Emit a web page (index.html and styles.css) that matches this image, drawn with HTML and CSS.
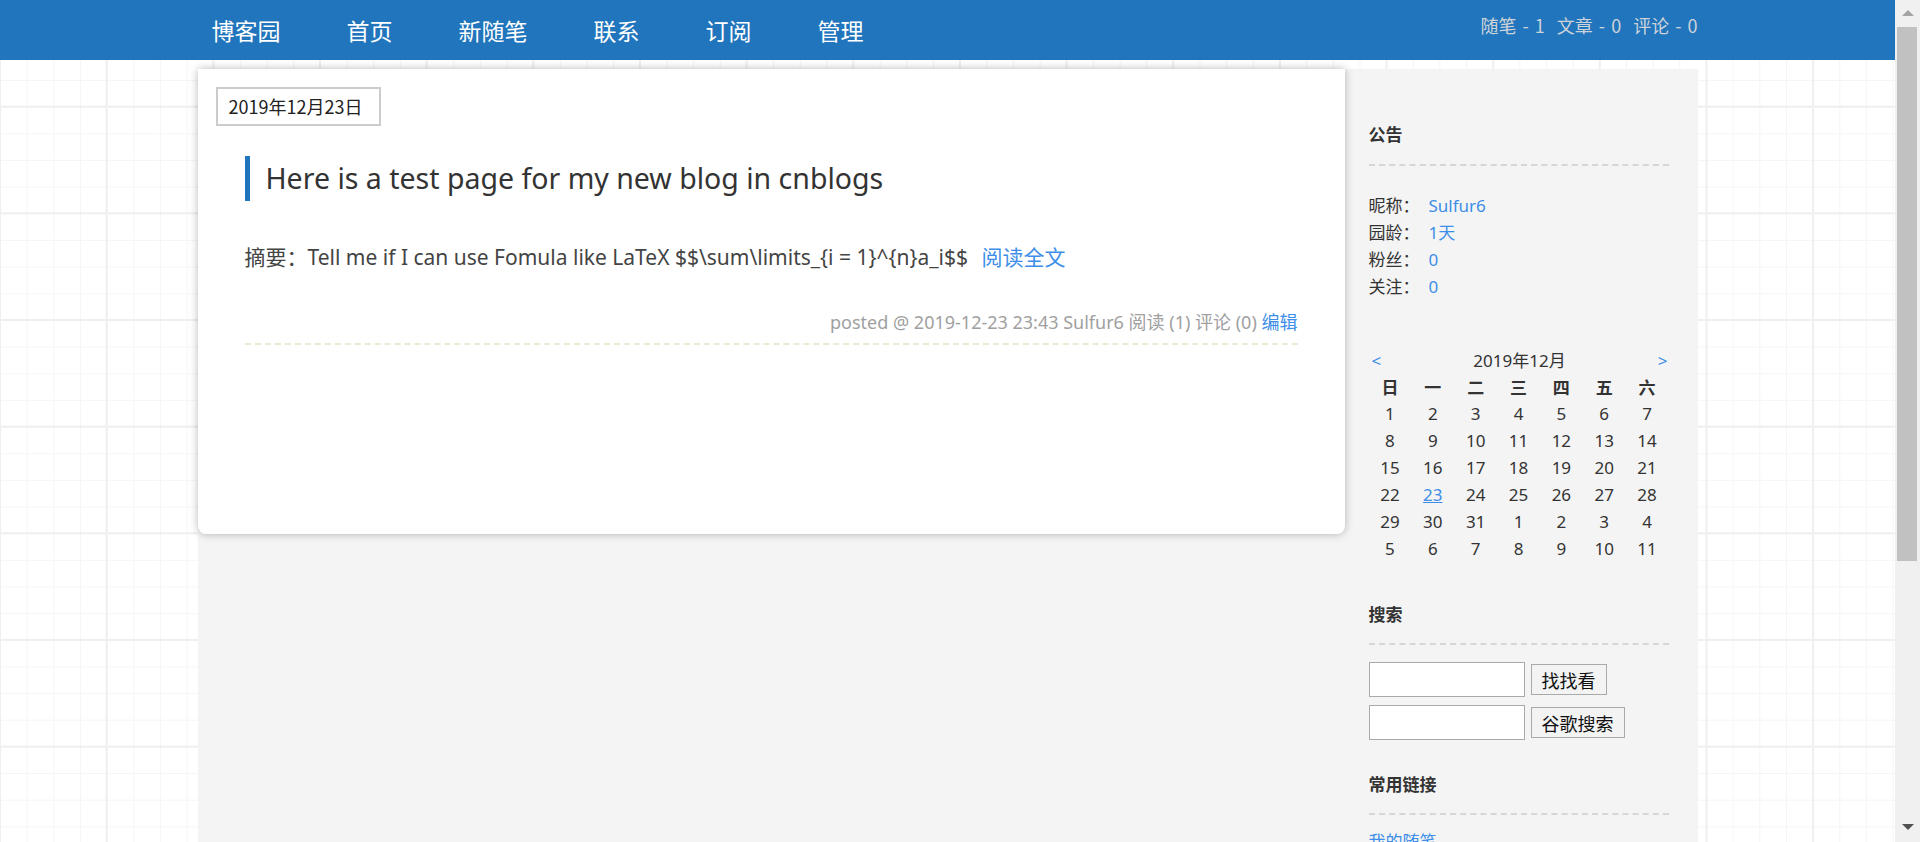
FILE: index.html
```html
<!DOCTYPE html>
<html lang="zh-CN">
<head>
<meta charset="utf-8">
<title>Sulfur6 - 博客园</title>
<link rel="stylesheet" href="styles.css">
</head>
<body>
<div class="app">
  <div class="page">
    <header class="topbar">
      <div class="topbar-inner">
        <nav class="nav">
          <a href="#">博客园</a>
          <a href="#">首页</a>
          <a href="#">新随笔</a>
          <a href="#">联系</a>
          <a href="#">订阅</a>
          <a href="#">管理</a>
        </nav>
        <div class="stats">随笔 - 1&nbsp; 文章 - 0&nbsp; 评论 - 0</div>
      </div>
    </header>
    <div class="wrap">
      <main class="main">
        <div class="card">
          <div class="day-title">2019年12月23日</div>
          <div class="post">
            <h2 class="post-title"><a href="#">Here is a test page for my new blog in cnblogs</a></h2>
            <div class="post-desc">摘要：Tell me if I can use Fomula like LaTeX $$\sum\limits_{i = 1}^{n}a_i$$ <a class="more" href="#">阅读全文</a></div>
            <div class="post-foot">posted @ 2019-12-23 23:43 Sulfur6 阅读 (1) 评论 (0) <a href="#">编辑</a></div>
          </div>
        </div>
      </main>
      <aside class="side">
        <section class="block">
          <h3 class="block-title">公告</h3>
          <div class="profile">
            <div class="row"><span class="lbl">昵称：</span><a href="#">Sulfur6</a></div>
            <div class="row"><span class="lbl">园龄：</span><a href="#">1天</a></div>
            <div class="row"><span class="lbl">粉丝：</span><a href="#">0</a></div>
            <div class="row"><span class="lbl">关注：</span><a href="#">0</a></div>
          </div>
        </section>
        <section class="calendar">
          <div class="cal-head"><a href="#">&lt;</a><span>2019年12月</span><a href="#">&gt;</a></div>
          <div class="cal-grid">
            <b>日</b><b>一</b><b>二</b><b>三</b><b>四</b><b>五</b><b>六</b>
            <span>1</span><span>2</span><span>3</span><span>4</span><span>5</span><span>6</span><span>7</span>
            <span>8</span><span>9</span><span>10</span><span>11</span><span>12</span><span>13</span><span>14</span>
            <span>15</span><span>16</span><span>17</span><span>18</span><span>19</span><span>20</span><span>21</span>
            <span>22</span><a href="#">23</a><span>24</span><span>25</span><span>26</span><span>27</span><span>28</span>
            <span>29</span><span>30</span><span>31</span><span>1</span><span>2</span><span>3</span><span>4</span>
            <span>5</span><span>6</span><span>7</span><span>8</span><span>9</span><span>10</span><span>11</span>
          </div>
        </section>
        <section class="block search">
          <h3 class="block-title">搜索</h3>
          <div class="search-row"><input class="search-input" type="text"><button class="search-btn">找找看</button></div>
          <div class="search-row"><input class="search-input" type="text"><button class="search-btn">谷歌搜索</button></div>
        </section>
        <section class="block links">
          <h3 class="block-title">常用链接</h3>
          <ul class="link-list">
            <li><a href="#">我的随笔</a></li>
            <li><a href="#">我的评论</a></li>
            <li><a href="#">我的参与</a></li>
          </ul>
        </section>
      </aside>
    </div>
  </div>
  <div class="vscroll">
    <div class="vs-btn vs-up"></div>
    <div class="vs-track"><div class="vs-thumb"></div></div>
    <div class="vs-btn vs-down"></div>
  </div>
</div>
</body>
</html>
```
FILE: styles.css
```css
html, body {
  margin: 0;
  height: 100%;
  overflow: hidden;
}

body {
  font-family: "Noto Sans", "Noto Sans CJK SC", sans-serif;
  color: #333;
}

a { color: #3d8ee8; text-decoration: none; }

.app {
  display: flex;
  height: 100vh;
  overflow: hidden;
}

.page {
  flex: 1;
  min-width: 0;
  overflow: hidden;
  background-color: #fff;
  background-image:
    linear-gradient(#efefef 2px, transparent 2px),
    linear-gradient(90deg, #efefef 2px, transparent 2px),
    linear-gradient(#f5f5f5 1px, transparent 1px),
    linear-gradient(90deg, #f5f5f5 1px, transparent 1px);
  background-size: 106.67px 106.67px, 106.67px 106.67px, 26.67px 26.67px, 26.67px 26.67px;
  background-position: 0 -1px, -1px 0, 0 0, 0 0;
}

/* fake window scrollbar */
.vscroll {
  width: 25px;
  flex: none;
  background: #f0f0f0;
  display: flex;
  flex-direction: column;
}
.vs-btn {
  height: 25px;
  flex: none;
  display: flex;
  justify-content: center;
  box-sizing: border-box;
}
.vs-up { align-items: flex-start; padding-top: 10px; }
.vs-down { align-items: flex-end; padding-bottom: 12px; }
.vs-up::before {
  content: "";
  border-left: 6px solid transparent;
  border-right: 6px solid transparent;
  border-bottom: 6px solid #a3a3a3;
}
.vs-down::before {
  content: "";
  border-left: 6px solid transparent;
  border-right: 6px solid transparent;
  border-top: 6px solid #505050;
}
.vs-track {
  flex: 1;
  padding: 2px 3px 0 2px;
}
.vs-thumb {
  height: 534px;
  background: #c1c1c1;
}

.topbar {
  background: #2175bc;
  height: 60px;
}
.topbar-inner {
  width: 1500px;
  margin: 0 auto;
  display: flex;
  justify-content: space-between;
  height: 60px;
}
.nav {
  display: flex;
  gap: 66px;
  padding-left: 14px;
  align-items: center;
}
.nav a {
  color: #fff;
  font-family: "Noto Sans CJK SC", sans-serif;
  font-size: 23px;
  line-height: 30px;
}
.stats {
  color: #cdd3d9;
  font-family: "Noto Sans CJK SC", sans-serif;
  font-size: 18px;
  line-height: 22px;
  padding-top: 14px;
  white-space: pre;
  word-spacing: 2px;
}

.wrap {
  width: 1500px;
  margin: 9px auto 0;
  background: #f4f4f4;
  display: flex;
  align-items: flex-start;
  min-height: 1200px;
}
.main { width: 1147px; flex: none; }
.card {
  background: #fff;
  height: 465px;
  box-sizing: border-box;
  border-radius: 0 0 8px 8px;
  box-shadow: 0 0 9px rgba(0, 0, 0, 0.28);
  padding: 18px 47px 0 18px;
}
.day-title {
  display: inline-block;
  border: 2px solid #ccc;
  padding: 0 17px 0 11px;
  font-family: "Noto Sans CJK SC", sans-serif;
  font-size: 18px;
  line-height: 35px;
  color: #222;
}
.post { padding-left: 29px; }
.post-title {
  margin: 30px 0 0 0;
  border-left: 5px solid #2175bc;
  padding-left: 16px;
  font-weight: normal;
  font-size: 28.5px;
  line-height: 45px;
}
.post-title a { color: #333; }
.post-desc {
  margin-top: 41px;
  font-size: 21px;
  line-height: 30px;
  color: #444;
}
.post-desc .more { margin-left: 8px; }
.post-foot {
  margin-top: 38px;
  text-align: right;
  font-size: 18px;
  line-height: 24px;
  color: #a0a0a0;
  padding-bottom: 9px;
  border-bottom: 2px dashed #ebe9d3;
}

.side {
  width: 300px;
  padding: 56px 29px 0 24px;
  flex: none;
  font-size: 17px;
}
.block-title {
  margin: 0;
  font-size: 17px;
  line-height: 20px;
  font-weight: bold;
  color: #333;
  padding-bottom: 19px;
  border-bottom: 2px dashed #d6d6d6;
}
.profile { padding-top: 26px; }
.profile .row { line-height: 27px; }
.profile .lbl { display: inline-block; width: 60px; }

.calendar { margin-top: 49px; }
.cal-head {
  display: flex;
  justify-content: space-between;
  align-items: center;
  line-height: 24px;
  padding: 0 1px 0 3px;
}
.cal-grid {
  display: grid;
  grid-template-columns: repeat(7, 1fr);
  grid-auto-rows: 27px;
  align-items: center;
  justify-items: center;
  font-size: 17px;
  margin-top: 0;
}
.cal-grid b { font-weight: bold; }
.cal-grid a { text-decoration: underline; }

.search { margin-top: 43px; }
.search .block-title { padding-bottom: 18px; }
.search-row { display: flex; align-items: center; gap: 6px; }
.search .block-title + .search-row { margin-top: 17px; }
.search-row + .search-row { margin-top: 8px; }
.search-input {
  width: 156px;
  height: 35px;
  box-sizing: border-box;
  border: 1px solid #a9a9a9;
  background: #fff;
  margin: 0;
}
.search-btn {
  height: 31px;
  box-sizing: border-box;
  border: 1px solid #a9a9a9;
  background: #f3f3f3;
  font-family: "Noto Sans CJK SC", sans-serif;
  font-size: 18px;
  line-height: 20px;
  color: #111;
  padding: 0 10px;
  margin: 0;
}

.links { margin-top: 35px; }
.links .block-title { padding-bottom: 18px; }
.link-list { list-style: none; margin: 0; padding: 14px 0 0; }
.link-list li { line-height: 26px; }
```
